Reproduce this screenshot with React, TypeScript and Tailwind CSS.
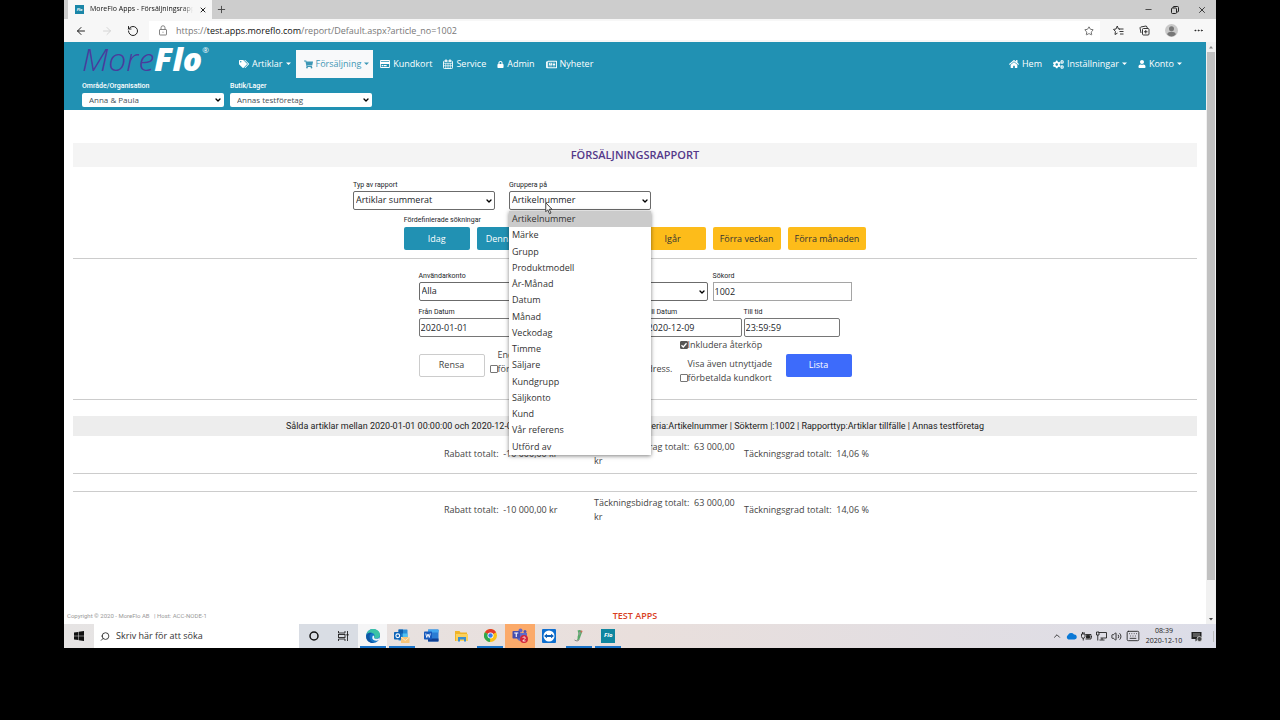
import { useState } from "react";
import type { ReactNode } from "react";
import {
  FaCogs,
  FaHome,
  FaLock,
  FaRegCreditCard,
  FaRegNewspaper,
  FaShoppingCart,
  FaTags,
  FaUser,
} from "react-icons/fa";
import {
  ArrowLeft,
  ArrowRight,
  ChevronDown,
  ChevronUp,
  Ellipsis,
  Keyboard,
  Minus,
  Plus,
  RotateCw,
  Search,
  Star,
  Volume2,
  X,
} from "lucide-react";

const groupings = [
  "Artikelnummer",
  "Märke",
  "Grupp",
  "Produktmodell",
  "År-Månad",
  "Datum",
  "Månad",
  "Veckodag",
  "Timme",
  "Säljare",
  "Kundgrupp",
  "Säljkonto",
  "Kund",
  "Vår referens",
  "Utförd av",
];

function SelectBox({
  id,
  label,
  options,
  tone = "form",
}: {
  id: string;
  label: string;
  options: string[];
  tone?: "form" | "header";
}) {
  const header = tone === "header";
  return (
    <div className="flex w-[142px] flex-col">
      <label
        htmlFor={id}
        className={
          header
            ? "h-[13px] font-['Roboto',sans-serif] text-[7px] leading-[13px] font-medium text-white"
            : "h-[14px] font-['Roboto',sans-serif] text-[7px] leading-4 text-[#212529]"
        }
      >
        {label}
      </label>
      <div className="relative">
        <select
          id={id}
          className={
            header
              ? "block h-[14px] w-full appearance-none rounded-[2px] bg-white pl-[7px] text-[8px] leading-[14px] text-[#495057]"
              : "block h-[19px] w-full appearance-none rounded-[2px] border border-[#6b6b6b] bg-white pb-[2px] pl-[2px] text-[9px] text-[#212529]"
          }
        >
          {options.map((o) => (
            <option key={o}>{o}</option>
          ))}
        </select>
        <ChevronDown
          className="pointer-events-none absolute inset-y-0 right-[2px] my-auto text-black"
          size={8}
          strokeWidth={4}
        />
      </div>
    </div>
  );
}

function TextField({
  id,
  label,
  value,
  light = false,
}: {
  id: string;
  label: string;
  value: string;
  light?: boolean;
}) {
  return (
    <div className={light ? "flex w-[139px] flex-col" : "flex w-24 flex-col"}>
      <label
        htmlFor={id}
        className="h-[14px] font-['Roboto',sans-serif] text-[7px] leading-4 text-[#212529]"
      >
        {label}
      </label>
      <input
        id={id}
        type="text"
        defaultValue={value}
        className={
          light
            ? "h-[19px] w-full border border-[#a5a5a5] pl-px text-[9px] text-[#212529]"
            : "h-[19px] w-full rounded-[2px] border border-[#767676] pb-px pl-px text-[9px] text-[#212529]"
        }
      />
    </div>
  );
}

function Tick({ checked = false }: { checked?: boolean }) {
  return (
    <span className="relative flex h-[14px] w-2 items-center">
      <input
        type="checkbox"
        defaultChecked={checked}
        className="peer size-2 appearance-none rounded-[1px] border border-[#767676] bg-white checked:border-[#555] checked:bg-[#555]"
      />
      <svg
        className="pointer-events-none absolute inset-0 my-auto hidden peer-checked:block"
        width="8"
        height="8"
        viewBox="0 0 16 16"
        fill="none"
        stroke="#fff"
        strokeWidth="2.500"
      >
        <path d="m3 8.500 3.500 3.500L13 4.500" />
      </svg>
    </span>
  );
}

function NavLink({
  icon,
  children,
  caret = false,
  active = false,
}: {
  icon: ReactNode;
  children: ReactNode;
  caret?: boolean;
  active?: boolean;
}) {
  return (
    <a
      href="#"
      className={
        active
          ? "flex h-7 items-center gap-[3px] bg-[#f8f9fa] pr-1 pl-2 text-[9px] text-[#3d97b5]"
          : "flex h-7 items-center gap-[3px] px-[5px] text-[9px] font-medium text-white"
      }
    >
      {icon}
      <span>{children}</span>
      {caret && (
        <svg width="5" height="6" viewBox="0 0 10 12" fill="currentColor">
          <path d="M0 3h10L5 8z" />
        </svg>
      )}
    </a>
  );
}

function CalendarIcon() {
  return (
    <svg width="10" height="10" viewBox="0 0 20 20" fill="none" stroke="currentColor" strokeWidth="1.8">
      <rect x="1" y="4" width="18" height="15" rx="1.5" />
      <path d="M1 8.5h18M1 13.5h18M5.5 8v11M10 8v11M14.5 8v11" strokeWidth="1.4" />
      <path d="M6 1v5M14 1v5" strokeWidth="3" />
    </svg>
  );
}

function Logo() {
  return (
    <div className="flex items-start whitespace-nowrap text-[32px] leading-[34px] italic">
      <span className="font-light text-[#4a3c9c]">More</span>
      <span className="font-extrabold text-white">Flo</span>
      <span className="text-[8px] leading-[16px] text-white not-italic">®</span>
    </div>
  );
}

function BrowserChrome() {
  return (
    <div>
      <div className="flex h-[19px] items-stretch bg-[#cdcdcd]">
        <div className="ml-1 flex w-36 items-center bg-[#f7f7f7] pr-[5px] pl-[7px]">
          <span className="flex size-[9px] items-center justify-center bg-[#1a86a8] text-[4px] font-bold text-white italic">
            Flo
          </span>
          <span className="ml-[6px] w-[103px] overflow-hidden mask-r-from-90% text-[7px] whitespace-nowrap text-[#111]">
            MoreFlo Apps - Försäljningsrapport
          </span>
          <button type="button" aria-label="Stäng flik" className="ml-auto text-[#222]">
            <X size={8} strokeWidth={3} />
          </button>
        </div>
        <button type="button" aria-label="Ny flik" className="ml-1 text-[#444]">
          <Plus size={11} strokeWidth={2} />
        </button>
        <div className="ml-auto flex items-center gap-[18px] pr-[9px] text-[#222]">
          <button type="button" aria-label="Minimera">
            <Minus size={9} strokeWidth={2} />
          </button>
          <button type="button" aria-label="Återställ">
            <svg width="8" height="8" viewBox="0 0 16 16" fill="none" stroke="currentColor" strokeWidth="2">
              <rect x="1" y="4" width="10" height="11" rx="2" />
              <path d="M4 4V3a2 2 0 0 1 2-2h7a2 2 0 0 1 2 2v7a2 2 0 0 1-2 2h-2" />
            </svg>
          </button>
          <button type="button" aria-label="Stäng">
            <X size={10} strokeWidth={2} />
          </button>
        </div>
      </div>
      <div className="flex h-[23px] items-center bg-[#f7f7f7] text-[#222]">
        <button type="button" aria-label="Bakåt" className="ml-[11px]">
          <ArrowLeft size={12} strokeWidth={2} />
        </button>
        <button type="button" aria-label="Framåt" className="ml-[14px] text-[#d4d4d4]">
          <ArrowRight size={12} strokeWidth={2} />
        </button>
        <button type="button" aria-label="Uppdatera" className="ml-[14px]">
          <RotateCw size={12} strokeWidth={2} className="-scale-x-100" />
        </button>
        <div className="ml-[10px] flex h-[19px] flex-1 items-center bg-white pl-[9px]">
          <svg width="10" height="11" viewBox="0 0 20 22" fill="none" stroke="#777" strokeWidth="1.800">
            <rect x="3" y="9" width="14" height="11" rx="1" />
            <path d="M6 9V5.500a4 4 0 0 1 8 0V9M10 13.500v2" />
          </svg>
          <span className="ml-2 text-[9px] text-[#777]">
            https://<span className="text-[#111]">test.apps.moreflo.com</span>
            /report/Default.aspx?article_no=1002
          </span>
          <Star size={10} strokeWidth={2} className="mr-[6px] ml-auto text-[#555]" />
        </div>
        <div className="flex items-center gap-[15px] pr-3 pl-[13px]">
          <svg width="11" height="11" viewBox="0 0 22 22" fill="none" stroke="currentColor" strokeWidth="1.800">
            <path d="M12 8H21M13 13h8M14 18h7M14 8.500 11 8 8.500 2 6 8 1 8.800l3.800 4L4 19l5-2.800" />
          </svg>
          <svg width="11" height="11" viewBox="0 0 22 22" fill="none" stroke="currentColor" strokeWidth="1.800">
            <rect x="7" y="7" width="13" height="13" rx="2" />
            <path d="M4 16 2 5.500 3.500 4 14 2l2 1.500.5 3M13.500 10v7M10 13.500h7" />
          </svg>
          <svg width="13" height="13" viewBox="0 0 26 26">
            <circle cx="13" cy="13" r="13" fill="#c9c9c9" />
            <circle cx="13" cy="9.500" r="5" fill="#777" />
            <path d="M4.500 21c0-4 3-5.500 8.500-5.500s8.500 1.500 8.500 5.500c-5 5-12 5-17 0z" fill="#777" />
          </svg>
          <Ellipsis size={11} strokeWidth={2} />
        </div>
      </div>
    </div>
  );
}

function SiteHeader() {
  return (
    <header className="flex h-[68px] flex-col bg-[#2191b3] pl-[18px]">
      <div className="flex h-[38px] items-start">
        <div className="w-[152px]">
          <Logo />
        </div>
        <nav className="flex flex-1 items-center pt-2 pr-[19px]">
          <NavLink icon={<FaTags size={10} />} caret>
            Artiklar
          </NavLink>
          <NavLink icon={<FaShoppingCart size={9} />} caret active>
            Försäljning
          </NavLink>
          <div className="flex gap-px pl-[2px]">
            <NavLink icon={<FaRegCreditCard size={10} />}>Kundkort</NavLink>
            <NavLink icon={<CalendarIcon />}>Service</NavLink>
            <NavLink icon={<FaLock size={7} />}>Admin</NavLink>
            <NavLink icon={<FaRegNewspaper size={11} />}>Nyheter</NavLink>
          </div>
          <div className="ml-auto flex gap-px">
            <NavLink icon={<FaHome size={10} />}>Hem</NavLink>
            <NavLink icon={<FaCogs size={11} />} caret>
              Inställningar
            </NavLink>
            <NavLink icon={<FaUser size={8} />} caret>
              Konto
            </NavLink>
          </div>
        </nav>
      </div>
      <div className="flex gap-[6px]">
        <SelectBox id="org" label="Område/Organisation" options={["Anna & Paula"]} tone="header" />
        <SelectBox id="store" label="Butik/Lager" options={["Annas testföretag"]} tone="header" />
      </div>
    </header>
  );
}

function GroupingMenu() {
  const [selected, setSelected] = useState(0);
  return (
    <div className="relative">
      <SelectBox id="grouping" label="Gruppera på" options={groupings} />
      <ul
        role="listbox"
        aria-label="Gruppera på"
        className="absolute top-[34px] left-0 z-10 grid h-[244px] w-[142px] auto-rows-fr bg-white text-[9px] leading-[15px] text-[#333] shadow-[0_1px_4px_rgba(0,0,0,0.5)]"
      >
        {groupings.map((g, i) => (
          <li
            key={g}
            role="option"
            aria-selected={i === selected}
            onClick={() => setSelected(i)}
            className={i === selected ? "bg-[#cbcbcb] pl-[3px]" : "pl-[3px]"}
          >
            {g}
          </li>
        ))}
      </ul>
      <svg className="absolute top-[25px] left-9 z-20" width="8" height="13" viewBox="0 0 16 26">
        <path
          d="M1.500 1.500v18l4-4 3.500 8 3-1.500-3.500-7.500H14z"
          fill="#fff"
          stroke="#333"
          strokeWidth="1.800"
        />
      </svg>
    </div>
  );
}

function QuickButton({ children, past = false }: { children: ReactNode; past?: boolean }) {
  return (
    <button
      type="button"
      className={
        past
          ? "h-[23px] min-w-[66px] rounded-[2px] bg-[#fdbc1a] px-[7px] text-[9px] text-[#333]"
          : "h-[23px] min-w-[66px] rounded-[2px] bg-[#2191b3] px-[9px] text-[9px] font-medium text-white"
      }
    >
      {children}
    </button>
  );
}

function Totals() {
  return (
    <div className="flex justify-center pl-15 text-[9px] leading-[14px] text-[#444]">
      <div className="grid grid-cols-[150px_150px_150px] items-center">
        <span className="px-1 whitespace-pre">{"Rabatt totalt:  -10 000,00 kr"}</span>
        <span className="px-1 whitespace-pre-wrap">{"Täckningsbidrag totalt:  63\u00a0000,00 kr"}</span>
        <span className="px-1 whitespace-pre">{"Täckningsgrad totalt:  14,06 %"}</span>
      </div>
    </div>
  );
}

function ReportPage() {
  return (
    <main className="flex flex-1 flex-col px-[9px] pt-[33px]">
      <h1 className="h-6 bg-[#f4f4f4] text-center text-[11px] leading-[23px] font-semibold text-[#54398a]">
        FÖRSÄLJNINGSRAPPORT
      </h1>

      <form onSubmit={(e) => e.preventDefault()}>
        <div className="flex justify-center pt-[10px]">
          <div className="flex w-[564px] gap-[14px]">
            <SelectBox id="reporttype" label="Typ av rapport" options={["Artiklar summerat"]} />
            <GroupingMenu />
          </div>
        </div>

        <div className="flex justify-center border-b border-[#ccc] pt-[3px] pb-2">
          <div className="flex flex-col">
            <p className="h-[14px] font-['Roboto',sans-serif] text-[7px] leading-[14px] text-[#212529]">
              Fördefinierade sökningar
            </p>
            <div className="flex gap-[7px]">
              <QuickButton>Idag</QuickButton>
              <QuickButton>Denna vecka</QuickButton>
              <QuickButton>Denna månad</QuickButton>
              <QuickButton past>Igår</QuickButton>
              <QuickButton past>Förra veckan</QuickButton>
              <QuickButton past>Förra månaden</QuickButton>
            </div>
          </div>
        </div>

        <div className="flex justify-center border-b border-[#ccc] pt-[9px] pb-[14px]">
          <div className="flex w-[433px] flex-col">
            <div className="flex gap-[5px]">
              <SelectBox id="account" label="Användarkonto" options={["Alla"]} />
              <SelectBox id="brand" label="Märke" options={["Alla"]} />
              <TextField id="keyword" label="Sökord" value="1002" light />
            </div>
            <div className="flex gap-[2px] pt-[3px]">
              <TextField id="fromdate" label="Från Datum" value="2020-01-01" />
              <TextField id="fromtime" label="Från tid" value="00:00:00" />
              <div className="flex gap-[2px] pl-[31px]">
                <TextField id="todate" label="Till Datum" value="2020-12-09" />
                <TextField id="totime" label="Till tid" value="23:59:59" />
              </div>
            </div>
            <div className="flex items-center pt-px text-[9px] text-[#444]">
              <button
                type="button"
                className="mt-[7px] h-[23px] w-[66px] rounded-[2px] border border-[#ccc] bg-white text-[9px]"
              >
                Rensa
              </button>
              <label className="ml-[5px] flex w-[190px] items-end leading-[14px]">
                <Tick />
                <span className="flex flex-1 flex-col">
                  <span>Endast kunder med</span>
                  <span className="flex w-[175px] justify-between">
                    <span>försäljning samt</span>
                    <span>e-postadress.</span>
                  </span>
                </span>
              </label>
              <div className="flex flex-1 flex-col gap-[5px]">
                <label className="flex items-center leading-[14px]">
                  <Tick checked />
                  <span>Inkludera återköp</span>
                </label>
                <label className="flex items-end leading-[14px]">
                  <Tick />
                  <span>
                    Visa även utnyttjade
                    <br />
                    förbetalda kundkort
                  </span>
                </label>
              </div>
              <button
                type="submit"
                className="mt-[7px] h-[23px] w-[66px] rounded-[2px] bg-[#3d6bfb] text-[9px] font-medium text-white"
              >
                Lista
              </button>
            </div>
          </div>
        </div>
      </form>

      <section className="flex flex-col pt-4">
        <p className="h-5 bg-[#ededed] text-center font-['Roboto',sans-serif] text-[9px] leading-5 whitespace-nowrap text-[#222]">
          Sålda artiklar mellan 2020-01-01 00:00:00 och 2020-12-09 23:59:59 | Använda sorteringskriteria:Artikelnummer |
          Sökterm |:1002 | Rapporttyp:Artiklar tillfälle | Annas testföretag
        </p>
        <div className="border-b border-[#ccc] pt-1 pb-[5px]">
          <Totals />
        </div>
        <div className="mt-[17px] border-t border-[#ccc] pt-1">
          <Totals />
        </div>
      </section>
    </main>
  );
}

function TaskCell({
  label,
  open = false,
  tone = "",
  children,
}: {
  label: string;
  open?: boolean;
  tone?: string;
  children: ReactNode;
}) {
  return (
    <button
      type="button"
      aria-label={label}
      className={`flex h-6 flex-col items-center justify-between ${tone}`}
    >
      <span className="flex flex-1 items-center pt-px">{children}</span>
      <span className={open ? "h-[2px] w-[26px] bg-[#1a73c8]" : "h-[2px] w-[26px]"} />
    </button>
  );
}

function Taskbar() {
  return (
    <footer className="flex h-6 items-stretch bg-linear-to-r from-[#e6e4e4] via-[#e9dfdc] to-[#dcdde8] text-[#222]">
      <button type="button" aria-label="Start" className="flex w-[30px] items-center justify-center">
        <svg width="10" height="10" viewBox="0 0 20 20" fill="#111">
          <path d="M0 3 8.500 1.800v7.700H0zM9.500 1.600 20 0v9.500H9.500zM0 10.500h8.500v7.700L0 17zM9.500 10.500H20V20L9.500 18.400z" />
        </svg>
      </button>
      <label className="flex w-[205px] items-center bg-white pl-[6px]">
        <Search size={11} strokeWidth={2} className="-scale-x-100" />
        <input
          type="text"
          aria-label="Sök"
          placeholder="Skriv här för att söka"
          className="ml-[6px] w-full bg-transparent text-[9px] placeholder:text-[#333]"
        />
      </label>
      <div className="flex bg-[#d9dde4]">
        <button type="button" aria-label="Cortana" className="flex w-[29px] items-center justify-center">
          <svg width="10" height="10" viewBox="0 0 20 20" fill="none" stroke="#111" strokeWidth="3">
            <circle cx="10" cy="10" r="8" />
          </svg>
        </button>
        <button type="button" aria-label="Aktivitetsvy" className="flex w-[30px] items-center justify-center">
          <svg width="11" height="10" viewBox="0 0 22 20" fill="none" stroke="#222" strokeWidth="1.800">
            <path d="M1 0v4h13V0M1 20v-4h13v4M19 0v20" />
            <rect x="1" y="7" width="13" height="6" />
            <path d="M17 6h4v3h-4z" fill="#222" stroke="none" />
          </svg>
        </button>
      </div>
      <div className="grid w-[265px] grid-cols-9">
        <TaskCell label="Edge" open tone="bg-[#f5f5f6]">
          <svg width="14" height="14" viewBox="0 0 28 28">
            <circle cx="14" cy="14" r="14" fill="#1577c9" />
            <path d="M1 11C3 3 9 0 14 0c8 0 14 5 14 12 0 5-4 7-8 7-3 0-4-1-4-2 2-2 2-8-4-9C7 7 3 8 1 11z" fill="#3cc3a6" />
            <path d="M1 11c3-4 8-4 11-3-5 2-6 7-4 12 2 4 5 7 9 8C6 30-2 21 1 11z" fill="#0d57a5" />
            <path d="M16 17c0 2 3 3 5 2.500 3 0 5-1 6.500-2.500L26 22c-4 2-10 2-13-2-1-3 0-6 1-7 2 0 3 2 2 4z" fill="#eef5fa" />
          </svg>
        </TaskCell>
        <TaskCell label="Outlook" open>
          <svg width="16" height="14" viewBox="0 0 32 28">
            <rect x="9" y="1" width="18" height="22" rx="1" fill="#2a8ed8" />
            <path d="M9 1h9v8H9z" fill="#0f5fae" />
            <path d="M18 9h9v7h-9z" fill="#50c0f0" />
            <rect x="0" y="6" width="15" height="15" rx="1.500" fill="#0b63b8" />
            <circle cx="7.500" cy="13.500" r="3.800" fill="none" stroke="#fff" strokeWidth="2.200" />
            <rect x="14" y="16" width="17" height="12" fill="#f6c478" />
            <path d="m14 16 8.500 7 8.500-7" fill="none" stroke="#fff1d8" strokeWidth="1.500" />
          </svg>
        </TaskCell>
        <TaskCell label="Word">
          <svg width="15" height="13" viewBox="0 0 30 26">
            <rect x="8" y="1" width="21" height="24" rx="1.500" fill="#2b7cd3" />
            <path d="M8 1h21v6H8z" fill="#41a5ee" />
            <path d="M8 19h21v6H8z" fill="#103f91" />
            <rect x="0" y="5" width="16" height="16" rx="1.500" fill="#185abd" />
            <path d="m3.500 9 2 8L8 10l2.500 7 2-8" fill="none" stroke="#fff" strokeWidth="1.800" />
          </svg>
        </TaskCell>
        <TaskCell label="Utforskaren">
          <svg width="13" height="12" viewBox="0 0 26 24">
            <path d="M0 2h9l2 3h13v17H0z" fill="#f0b429" />
            <path d="M2 8h24v14H2z" fill="#fbd15c" />
            <path d="M6 14h16v9h-4v-4h-8v4H6z" fill="#3b8fd0" />
          </svg>
        </TaskCell>
        <TaskCell label="Chrome" open>
          <svg width="13" height="13" viewBox="0 0 26 26">
            <circle cx="13" cy="13" r="13" fill="#fbc116" />
            <path d="M13 13 1.700 6.500A13 13 0 0 1 24.300 6.500z" fill="#e33b2e" />
            <path d="M13 13 1.700 6.500A13 13 0 0 0 12 26z" fill="#2da94f" />
            <circle cx="13" cy="13" r="6" fill="#fff" />
            <circle cx="13" cy="13" r="4.500" fill="#3b7ded" />
          </svg>
        </TaskCell>
        <TaskCell label="Teams" tone="bg-[#fbaa6a]">
          <svg width="16" height="15" viewBox="0 0 32 30">
            <circle cx="17" cy="5" r="4" fill="#6067c8" />
            <circle cx="26" cy="7" r="3" fill="#4a52b8" />
            <path d="M10 10h20v10c0 4-4 6-8 6h-4c-5 0-8-3-8-7z" fill="#6169c9" />
            <rect x="1" y="6" width="15" height="15" rx="1.500" fill="#444db0" />
            <path d="M4.500 10h8M8.500 10v8" stroke="#fff" strokeWidth="2.200" />
            <circle cx="24" cy="22" r="8" fill="#d2263a" />
            <path d="M21.500 19.500c1-2.500 5-2 5 .5 0 2-4 4-5 6h5.500" fill="none" stroke="#fff" strokeWidth="1.800" />
          </svg>
        </TaskCell>
        <TaskCell label="TeamViewer">
          <svg width="14" height="14" viewBox="0 0 28 28">
            <rect width="28" height="28" rx="2" fill="#0d6fd0" />
            <circle cx="14" cy="14" r="11" fill="#fff" />
            <path d="m4 14 6-4.500V12h8V9.500l6 4.500-6 4.500V16h-8v2.500z" fill="#0b5fb8" />
          </svg>
        </TaskCell>
        <TaskCell label="Program" open>
          <svg width="12" height="13" viewBox="0 0 24 26">
            <path d="M9 3c5-3 9 0 9 3s-2 5-3 9-3 8-8 8c4-4 1-6 3-10 1-3 1-6-1-10z" fill="#58a868" />
            <path d="M12 6c3-1 4 1 3 3l-3 5z" fill="#8d9c94" />
            <path d="M3 22c4 3 8 2 10-1" fill="none" stroke="#888" strokeWidth="2" />
            <circle cx="17" cy="5" r="2" fill="#d06a5a" />
          </svg>
        </TaskCell>
        <TaskCell label="MoreFlo" open>
          <span className="flex size-[14px] items-center justify-center bg-[#0f86a0] text-[6px] font-bold text-white italic">
            Flo
          </span>
        </TaskCell>
      </div>
      <div className="ml-auto flex items-center pr-[2px]">
        <div className="flex items-center gap-1">
          <ChevronUp size={10} strokeWidth={2} />
          <svg width="11" height="8" viewBox="0 0 22 16">
            <path d="M5 15a5 5 0 0 1-1-9 7 7 0 0 1 12-1 5 5 0 0 1 1 10z" fill="#0a78d6" />
          </svg>
          <svg width="11" height="9" viewBox="0 0 22 18" fill="none" stroke="#222" strokeWidth="1.800">
            <path d="M9 5h11v9H9M21 8v3" />
            <path d="M11 7h6v5h-6z" fill="#222" />
            <path d="M1 4h7v5a3 3 0 0 1-7 0zM3 4V0M6 4V0M4.500 12v5" />
          </svg>
          <svg width="11" height="10" viewBox="0 0 22 20" fill="none" stroke="#222" strokeWidth="1.800">
            <path d="M5 3h16v11H9M12 14v4M7 18h10M1 2h5v6H1zM3.500 8v11" />
          </svg>
          <Volume2 size={11} strokeWidth={2} />
          <Keyboard size={14} strokeWidth={1.500} />
        </div>
        <div className="ml-[6px] flex w-9 flex-col items-center text-[7px] leading-[10px] whitespace-nowrap">
          <span>08:39</span>
          <span>2020-12-10</span>
        </div>
        <div className="ml-[9px] border-r border-[#bbb] pr-[11px]">
          <svg width="11" height="11" viewBox="0 0 22 22">
            <path d="M1 2h20v14h-7l-5 5v-5H1z" fill="#222" />
            <path d="M4 6h14M4 10h14" stroke="#bbb" strokeWidth="1.500" />
            <circle cx="17" cy="16" r="5" fill="#444" stroke="#ddd" strokeWidth="1.500" />
          </svg>
        </div>
      </div>
    </footer>
  );
}

export default function App() {
  return (
    <div className="min-h-screen bg-black px-16 pb-18 font-['Open_Sans',sans-serif]">
      <div className="flex min-h-[calc(100vh-72px)] flex-col bg-white">
        <BrowserChrome />
        <div className="flex flex-1 items-stretch">
          <div className="flex min-w-0 flex-1 flex-col">
            <SiteHeader />
            <ReportPage />
            <div className="grid grid-cols-3 items-center px-[3px] pb-[2px]">
              <p className="font-['Roboto',sans-serif] text-[6px] leading-[11px] whitespace-pre text-[#999]">
                {"Copyright © 2020 - MoreFlo AB   | Host: ACC-NODE-1"}
              </p>
              <p className="text-center text-[9px] leading-[13px] font-semibold text-[#d9401f]">TEST APPS</p>
            </div>
          </div>
          <div className="flex w-[10px] flex-col items-center bg-[#f1f1f1] text-[#555]">
            <svg width="6" height="10" viewBox="0 0 12 20">
              <path d="m2 13 4-5 4 5z" fill="#888" />
            </svg>
            <div className="w-2 flex-1 bg-[#c1c1c1]" />
            <svg className="mt-[34px]" width="6" height="10" viewBox="0 0 12 20">
              <path d="m2 8 4 5 4-5z" fill="#444" />
            </svg>
          </div>
        </div>
        <Taskbar />
      </div>
    </div>
  );
}
